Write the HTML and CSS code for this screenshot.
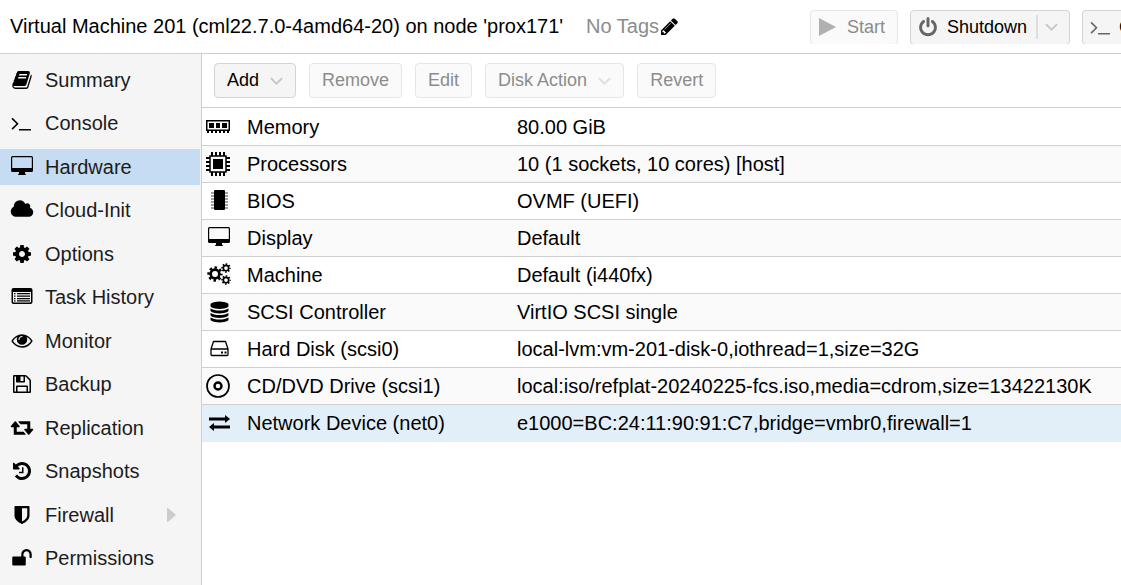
FILE: index.html
```html
<!doctype html>
<html lang="en">
  <head>
    <meta charset="UTF-8" />
    <meta name="viewport" content="width=device-width, initial-scale=1.0" />
    <title>Virtual Machine 201 - Hardware</title>
    <link rel="stylesheet" href="styles.css">
  </head>
  <body>
    <!-- Shared icons -->
    <svg class="sprite" aria-hidden="true">
      <symbol id="i-desktop" viewBox="0 0 24 24">
        <path fill-rule="evenodd" d="M2.500 1h19a1.500 1.500 0 0 1 1.500 1.500v13a1.500 1.500 0 0 1-1.500 1.500h-6.500v1.500q1 .5 1 1.500h-8q0-1 1-1.500v-1.500h-6.500a1.500 1.500 0 0 1-1.500-1.500v-13a1.500 1.500 0 0 1 1.500-1.500zM2.800 2.200q-.6 0-.6.6v10.200h19.600v-10.200q0-.6-.6-.6z" />
      </symbol>
      <symbol id="i-terminal" viewBox="-64 -128 2048 2048">
        <path d="M649 983l-466 466q-10 10-23 10t-23-10l-50-50q-10-10-10-23t10-23l393-393-393-393q-10-10-10-23t10-23l50-50q10-10 23-10t23 10l466 466q10 10 10 23t-10 23zm1079 457v64q0 14-9 23t-23 9h-960q-14 0-23-9t-9-23v-64q0-14 9-23t23-9h960q14 0 23 9t9 23z" />
      </symbol>
      <symbol id="i-cog" viewBox="-128 -128 2048 2048">
        <path d="M1152 896q0-106-75-181t-181-75-181 75-75 181 75 181 181 75 181-75 75-181zm512-109v222q0 12-8 23t-20 13l-185 28q-19 54-39 91 35 50 107 138 10 12 10 25t-9 23q-27 37-99 108t-94 71q-12 0-26-9l-138-108q-44 23-91 38-16 136-29 186-7 28-36 28h-222q-14 0-24.500-8.500t-11.500-21.500l-28-184q-49-16-90-37l-141 107q-10 9-25 9-14 0-25-11-126-114-165-168-7-10-7-23 0-12 8-23 15-21 51-66.500t54-70.500q-27-50-41-99l-183-27q-13-2-21-12.500t-8-23.500v-222q0-12 8-23t19-13l186-28q14-46 39-92-40-57-107-138-10-12-10-24 0-10 9-23 26-36 98.500-107.500t94.500-71.500q13 0 26 10l138 107q44-23 91-38 16-136 29-186 7-28 36-28h222q14 0 24.500 8.500t11.500 21.500l28 184q49 16 90 37l142-107q9-9 24-9 13 0 25 10 129 119 165 170 7 8 7 22 0 12-8 23-15 21-51 66.500t-54 70.500q26 50 41 98l183 28q13 2 21 12.500t8 23.500z" />
      </symbol>
      <symbol id="i-gear" viewBox="0 0 24 24">
        <circle cx="12" cy="12" r="6.500" fill="none" stroke="#000" stroke-width="4" />
        <circle cx="12" cy="12" r="9.500" fill="none" stroke="#000" stroke-width="4" stroke-dasharray="3.730 3.730" stroke-dashoffset="1.860" />
      </symbol>
      <symbol id="i-chevron" viewBox="0 0 14 10">
        <path d="M1 2l6 6 6-6" fill="none" stroke="currentColor" stroke-width="2" />
      </symbol>
    </svg>

    <header class="header">
      <h1 class="title">Virtual Machine 201 (cml22.7.0-4amd64-20) on node 'prox171'</h1>
      <div class="tags">
        <span>No Tags</span>
        <button type="button" class="tag-edit" aria-label="Edit Tags">
          <svg class="pencil" viewBox="128 128 1536 1536"><path d="M491 1536l91-91-235-235-91 91v107h128v128h107zm523-928q0-22-22-22-10 0-17 7l-542 542q-7 7-7 17 0 22 22 22 10 0 17-7l542-542q7-7 7-17zm-54-192l416 416-832 832h-416v-416zm683 96q0 53-37 90l-166 166-416-416 166-165q36-38 90-38 53 0 91 38l235 234q37 39 37 91z" /></svg>
        </button>
      </div>
      <div class="actions">
        <button type="button" class="btn btn-icon" disabled>
          <svg class="icon-sm" viewBox="0 0 20 20"><path d="M1 1l17 9-17 9z" /></svg>
          Start
        </button>
        <button type="button" class="btn btn-icon btn-split">
          <svg class="icon-sm" viewBox="64 0 1664 1728"><path d="M1664 896q0 156-61 298t-164 245-245 164-298 61-298-61-245-164-164-245-61-298q0-182 80.500-343t226.500-270q43-32 95.500-25t83.500 50q32 42 24.500 94.500t-49.500 84.500q-98 74-151.500 181t-53.500 228q0 104 40.500 198.500t109.500 163.500 163.500 109.500 198.500 40.500 198.500-40.500 163.500-109.500 109.500-163.500 40.500-198.500q0-121-53.500-228t-151.500-181q-42-32-49.500-84.500t24.500-94.500q31-43 84-50t95 25q146 109 226.500 270t80.500 343zm-640-768v640q0 52-38 90t-90 38-90-38-38-90v-640q0-52 38-90t90-38 90 38 38 90z" /></svg>
          Shutdown
          <span class="split"><svg class="chevron"><use href="#i-chevron" /></svg></span>
        </button>
        <button type="button" class="btn btn-icon btn-console">
          <svg class="icon"><use href="#i-terminal" /></svg>
          Console
        </button>
      </div>
    </header>

    <div class="layout">
      <nav class="sidebar">
        <a class="nav-item" href="#summary">
          <svg class="icon" viewBox="-128 -128 2048 2048"><path d="M1703 478q40 57 18 129l-275 906q-19 64-76.500 107.500t-122.500 43.500h-923q-77 0-148.500-53.500t-99.500-131.500q-24-67-2-127 0-4 3-27t4-37q1-8-3-21.500t-3-19.500q2-11 8-21t16.500-23.500 16.500-23.500q23-38 45-91.500t30-91.500q3-10 .5-30t-.5-28q3-11 17-28t17-23q21-36 42-92t25-90q1-9-2.500-32t.5-28q4-13 22-30.500t22-22.500q19-26 42.500-84.500t27.500-96.500q1-8-3-25.500t-2-26.500q2-8 9-18t18-23 17-21q8-12 16.500-30.500t15-35 16-36 19.500-32 26.500-23.500 36-11.500 47.500 5.500l-1 3q38-9 51-9h761q74 0 114 56t18 130l-274 906q-36 119-71.500 153.500t-128.500 34.500h-869q-27 0-38 15-11 16-1 43 24 70 144 70h923q29 0 56-15.500t35-41.500l300-987q7-22 5-57 38 15 59 43zm-1064 2q-4 13 2 22.500t20 9.500h608q13 0 25.500-9.500t16.500-22.500l21-64q4-13-2-22.500t-20-9.500h-608q-13 0-25.500 9.500t-16.500 22.500zm-83 256q-4 13 2 22.500t20 9.500h608q13 0 25.500-9.500t16.500-22.500l21-64q4-13-2-22.500t-20-9.500h-608q-13 0-25.500 9.500t-16.500 22.500z" /></svg>
          Summary
        </a>
        <a class="nav-item" href="#console">
          <svg class="icon"><use href="#i-terminal" /></svg>
          Console
        </a>
        <a class="nav-item active" href="#hardware" aria-current="page">
          <svg class="icon"><use href="#i-desktop" /></svg>
          Hardware
        </a>
        <a class="nav-item" href="#cloud-init">
          <svg class="icon" viewBox="0 -64 2048 2048"><path d="M1984 1152q0 159-112.500 271.500t-271.500 112.500h-1088q-185 0-316.500-131.500t-131.500-316.500q0-132 71-241.500t187-163.500q-2-28-2-43 0-212 150-362t362-150q158 0 286.500 88t187.500 230q70-62 166-62 106 0 181 75t75 181q0 75-41 138 129 30 213 134.500t84 239.500z" /></svg>
          Cloud-Init
        </a>
        <a class="nav-item" href="#options">
          <svg class="icon"><use href="#i-cog" /></svg>
          Options
        </a>
        <a class="nav-item" href="#tasks">
          <svg class="icon" viewBox="0 0 24 24"><path fill-rule="evenodd" d="M3.500 3h17a2 2 0 0 1 2 2v12a2 2 0 0 1-2 2h-17a2 2 0 0 1-2-2v-12a2 2 0 0 1 2-2zM3 7v9.500q0 1 1 1h16q1 0 1-1v-9.500zM4 8h1.500v1.200h-1.500zM7 8h13v1.200h-13zM4 10.500h1.500v1.200h-1.500zM7 10.500h13v1.200h-13zM4 13h1.500v1.200h-1.500zM7 13h13v1.200h-13zM4 15.300h1.500v1.200h-1.500zM7 15.300h13v1.200h-13z" /></svg>
          Task History
        </a>
        <a class="nav-item" href="#monitor">
          <svg class="icon" viewBox="-128 -64 2048 2048"><path d="M1664 960q-152-236-381-353 61 104 61 225 0 185-131.500 316.500t-316.500 131.500-316.500-131.500-131.500-316.500q0-121 61-225-229 117-381 353 133 205 333.500 326.500t434.500 121.500 434.500-121.500 333.500-326.500zm-720-384q0-20-14-34t-34-14q-125 0-214.500 89.500t-89.500 214.500q0 20 14 34t34 14 34-14 14-34q0-86 61-147t147-61q20 0 34-14t14-34zm848 384q0 34-20 69-140 230-376.500 368.500t-499.500 138.500-499.500-139-376.500-368q-20-35-20-69t20-69q140-229 376.500-368t499.500-139 499.500 139 376.500 368q20 35 20 69z" /></svg>
          Monitor
        </a>
        <a class="nav-item" href="#backup">
          <svg class="icon" viewBox="-128 -128 2048 2048"><path d="M512 1536h768v-384h-768v384zm896 0h128v-896q0-14-10-38.500t-20-34.500l-281-281q-10-10-34-20t-39-10v416q0 40-28 68t-68 28h-576q-40 0-68-28t-28-68v-416h-128v1280h128v-416q0-40 28-68t68-28h832q40 0 68 28t28 68v416zm-384-928v-320q0-13-9.500-22.500t-22.500-9.500h-192q-13 0-22.500 9.500t-9.500 22.500v320q0 13 9.500 22.500t22.500 9.500h192q13 0 22.500-9.500t9.500-22.500zm640 32v928q0 40-28 68t-68 28h-1344q-40 0-68-28t-28-68v-1344q0-40 28-68t68-28h928q40 0 88 20t76 48l280 280q28 28 48 76t20 88z" /></svg>
          Backup
        </a>
        <a class="nav-item" href="#replication">
          <svg class="icon" viewBox="-64 -64 2048 2048"><path d="M1280 1504q0 13-9.500 22.500t-22.500 9.500h-960q-8 0-13.500-2t-9-7-5.500-8-3-11.500-1-11.500v-600h-192q-26 0-45-19t-19-45q0-24 15-41l320-384q19-22 49-22t49 22l320 384q15 17 15 41 0 26-19 45t-45 19h-192v384h576q16 0 25 11l160 192q7 11 7 21zm640-416q0 24-15 41l-320 384q-20 23-49 23t-49-23l-320-384q-15-17-15-41 0-26 19-45t45-19h192v-384h-576q-16 0-25-12l-160-192q-7-9-7-20 0-13 9.500-22.500t22.500-9.500h960q8 0 13.500 2t9 7 5.500 8 3 11.500 1 11.500v600h192q26 0 45 19t19 45z" /></svg>
          Replication
        </a>
        <a class="nav-item" href="#snapshots">
          <svg class="icon" viewBox="-128 -128 2048 2048"><path d="M1664 896q0 156-61 298t-164 245-245 164-298 61q-172 0-327-72.500t-264-204.500q-7-10-6.500-22.500t8.500-20.500l137-138q10-9 25-9 16 2 23 12 73 95 179 147t225 52q104 0 198.500-40.500t163.500-109.500 109.500-163.500 40.500-198.500-40.500-198.500-109.500-163.500-163.500-109.500-198.500-40.500q-98 0-188 35.500t-160 101.500l137 138q31 30 14 69-17 40-59 40h-448q-26 0-45-19t-19-45v-448q0-42 40-59 39-17 69 14l130 129q107-101 244.500-156.500t284.500-55.500q156 0 298 61t245 164 164 245 61 298zm-640-288v448q0 14-9 23t-23 9h-320q-14 0-23-9t-9-23v-64q0-14 9-23t23-9h224v-352q0-14 9-23t23-9h64q14 0 23 9t9 23z" /></svg>
          Snapshots
        </a>
        <a class="nav-item" href="#firewall">
          <svg class="icon" viewBox="-128 -128 2048 2048"><path d="M1344 960v-640h-448v1137q119-63 213-137 235-184 235-360zm192-768v768q0 86-33.500 170.500t-83 150-118 127.500-126.500 103-121 77.500-89.500 49.500-42.500 20q-12 6-26 6t-26-6q-16-7-42.500-20t-89.500-49.500-121-77.500-126.500-103-118-127.500-83-150-33.500-170.500v-768q0-26 19-45t45-19h1152q26 0 45 19t19 45z" /></svg>
          Firewall
          <svg class="expander" viewBox="0 0 9 14"><path d="M0 0h1l8 7-8 7h-1z" /></svg>
        </a>
        <a class="nav-item" href="#permissions">
          <svg class="icon" viewBox="-128 -128 2048 2048"><path d="M1728 576v256q0 26-19 45t-45 19h-64q-26 0-45-19t-19-45v-256q0-106-75-181t-181-75-181 75-75 181v192h96q40 0 68 28t28 68v576q0 40-28 68t-68 28h-960q-40 0-68-28t-28-68v-576q0-40 28-68t68-28h672v-192q0-185 131.500-316.500t316.500-131.500 316.500 131.500 131.500 316.500z" /></svg>
          Permissions
        </a>
      </nav>

      <main class="content">
        <div class="toolbar">
          <button type="button" class="btn">Add <svg class="chevron"><use href="#i-chevron" /></svg></button>
          <button type="button" class="btn" disabled>Remove</button>
          <button type="button" class="btn" disabled>Edit</button>
          <button type="button" class="btn" disabled>Disk Action <svg class="chevron"><use href="#i-chevron" /></svg></button>
          <button type="button" class="btn" disabled>Revert</button>
        </div>

        <table class="hardware">
          <tbody>
            <tr>
              <th scope="row"><span class="device">
                <svg class="icon" viewBox="0 0 24 24"><path fill-rule="evenodd" d="M0 5h24v11h-1v2h-2v-2h-2v2h-2v-2h-2v2h-2v-2h-2v2h-2v-2h-2v2h-2v-2h-2v2h-2v-2h-1zM1.500 6.500v8h21v-8zM3 8h5v5h-5zM10 8h4v5h-4zM16 8h5v5h-5z" /></svg>
                Memory</span></th>
              <td>80.00 GiB</td>
            </tr>
            <tr>
              <th scope="row"><span class="device">
                <svg class="icon" viewBox="0 0 24 24"><path d="M7 7h10v10h-10z" /><path d="M4 4h16v16h-16z" fill="none" stroke="#000" stroke-width="1.500" /><path d="M6 0v4M10 0v4M14 0v4M18 0v4M6 20v4M10 20v4M14 20v4M18 20v4M0 6h4M0 10h4M0 14h4M0 18h4M20 6h4M20 10h4M20 14h4M20 18h4" stroke="#000" stroke-width="2" /></svg>
                Processors</span></th>
              <td>10 (1 sockets, 10 cores) [host]</td>
            </tr>
            <tr>
              <th scope="row"><span class="device">
                <svg class="icon" viewBox="0 0 24 24"><path d="M9 1h9a1 1 0 0 1 1 1v18a1 1 0 0 1-1 1h-9a1 1 0 0 1-1-1v-18a1 1 0 0 1 1-1z" /><path d="M5 4h3M5 7h3M5 10h3M5 13h3M5 16h3M5 19h3M19 4h3M19 7h3M19 10h3M19 13h3M19 16h3M19 19h3" stroke="#444" stroke-width="1" /></svg>
                BIOS</span></th>
              <td>OVMF (UEFI)</td>
            </tr>
            <tr>
              <th scope="row"><span class="device">
                <svg class="icon" viewBox="0 0 24 24"><use href="#i-desktop" x="1" y="0" width="24" height="24" /></svg>
                Display</span></th>
              <td>Default</td>
            </tr>
            <tr>
              <th scope="row"><span class="device">
                <svg class="icon" viewBox="0 0 24 24"><use href="#i-gear" x="1" y="3" width="16" height="16" /><use href="#i-gear" x="15" y="0" width="10" height="10" /><use href="#i-gear" x="15" y="12" width="10" height="10" /></svg>
                Machine</span></th>
              <td>Default (i440fx)</td>
            </tr>
            <tr>
              <th scope="row"><span class="device">
                <svg class="icon" viewBox="-256 -128 2048 2048"><path d="M896 768q237 0 443-43t325-127v170q0 69-103 128t-280 93.500-385 34.500-385-34.500-280-93.500-103-128v-170q119 84 325 127t443 43zm0 768q237 0 443-43t325-127v170q0 69-103 128t-280 93.500-385 34.500-385-34.500-280-93.500-103-128v-170q119 84 325 127t443 43zm0-384q237 0 443-43t325-127v170q0 69-103 128t-280 93.500-385 34.500-385-34.500-280-93.500-103-128v-170q119 84 325 127t443 43zm0-1152q208 0 385 34.500t280 93.500 103 128v128q0 69-103 128t-280 93.500-385 34.500-385-34.500-280-93.500-103-128v-128q0-69 103-128t280-93.500 385-34.500z" /></svg>
                SCSI Controller</span></th>
              <td>VirtIO SCSI single</td>
            </tr>
            <tr>
              <th scope="row"><span class="device">
                <svg class="icon" viewBox="0 0 24 24"><path d="M5 12l2.500-7.500h12l2.500 7.500v5.500q0 1-1 1h-15q-1 0-1-1v-5.500h17" fill="none" stroke="#000" stroke-width="1.300" stroke-linejoin="round" /><path d="M15 14.500h2v2h-2zM18.500 14.500h2v2h-2z" /></svg>
                Hard Disk (scsi0)</span></th>
              <td>local-lvm:vm-201-disk-0,iothread=1,size=32G</td>
            </tr>
            <tr>
              <th scope="row"><span class="device">
                <svg class="icon" viewBox="0 0 24 24" fill="none" stroke="#000"><circle cx="12" cy="12" r="11" stroke-width="1.700" /><circle cx="12" cy="12" r="3.500" stroke-width="2.400" /></svg>
                CD/DVD Drive (scsi1)</span></th>
              <td>local:iso/refplat-20240225-fcs.iso,media=cdrom,size=13422130K</td>
            </tr>
            <tr class="selected">
              <th scope="row"><span class="device">
                <svg class="icon" viewBox="0 0 24 24"><path d="M3 6.500h16v-2.500l5 4-5 4v-2.500h-16zM24 17.500h-16v2.500l-5-4 5-4v2.500h16z" /></svg>
                Network Device (net0)</span></th>
              <td>e1000=BC:24:11:90:91:C7,bridge=vmbr0,firewall=1</td>
            </tr>
          </tbody>
        </table>
      </main>
    </div>
  </body>
</html>
```
FILE: styles.css
```css
* {
  margin: 0;
  padding: 0;
  box-sizing: border-box;
}

body {
  display: flex;
  flex-direction: column;
  min-height: 100vh;
  overflow-x: hidden;
  font-family: "Liberation Sans", Arial, sans-serif;
  font-size: 20px;
  color: #000;
  background: #fff;
}

.sprite {
  display: none;
}

.icon {
  width: 24px;
  height: 24px;
  flex-shrink: 0;
  overflow: visible;
}

.icon-sm {
  width: 20px;
  height: 20px;
  flex-shrink: 0;
}

.chevron {
  width: 13px;
  height: 10px;
  color: #c4c4c4;
}

.header {
  display: flex;
  align-items: center;
  height: 54px;
  padding-left: 10px;
  border-bottom: 1px solid #cfcfcf;
  white-space: nowrap;
}

.title {
  flex: 0 0 576px;
  font-size: 20px;
  font-weight: normal;
}

.tags {
  display: flex;
  align-items: center;
  gap: 2px;
  color: #8c8c8c;
}

.tag-edit {
  display: flex;
  border: none;
  background: none;
}

.pencil {
  width: 17px;
  height: 17px;
}

/* the row of actions runs past the window edge and is cut off there */
.actions {
  display: flex;
  flex: 0 0 311px;
  gap: 12px;
  height: 34px;
  margin-left: auto;
  overflow: hidden;
}

.btn {
  display: flex;
  flex-shrink: 0;
  align-items: center;
  gap: 11px;
  height: 35px;
  padding: 0 12px;
  font-family: inherit;
  font-size: 18px;
  color: #000;
  background: #f5f5f5;
  border: 1px solid #d4d4d4;
  border-radius: 4px;
  white-space: nowrap;
}

.btn:disabled {
  color: #8c8c8c;
  background: #fafafa;
  border-color: #e6e6e6;
}

.btn:disabled .chevron {
  color: #dedede;
}

.btn-icon {
  gap: 9px;
  padding: 0 12px 0 7px;
}

.btn-icon svg {
  fill: #666;
}

.btn-icon:disabled svg {
  fill: #b0b0b0;
}

.btn-console {
  gap: 6px;
  padding-left: 6px;
}

.split {
  display: flex;
  align-items: center;
  height: 24px;
  padding-left: 7px;
  border-left: 2px solid #dedede;
}

.btn-split {
  padding-right: 11px;
}

.layout {
  display: flex;
  flex: 1;
}

.sidebar {
  display: flex;
  flex-direction: column;
  flex: 0 0 202px;
  gap: 7px;
  padding: 8px 1px 8px 0;
  background: #f5f5f5;
  border-right: 1px solid #cfcfcf;
}

.nav-item {
  display: flex;
  align-items: center;
  gap: 11px;
  height: 36px;
  padding: 0 24px 0 10px;
  color: #1c1c1c;
  text-decoration: none;
}

.nav-item .icon {
  fill: #000;
}

.nav-item:nth-child(even) {
  margin-bottom: 1px;
}

.nav-item.active {
  background: #c5dcf2;
}

.expander {
  width: 9px;
  height: 14px;
  margin-left: auto;
  fill: #ccc;
}

.content {
  flex: 1;
  min-width: 0;
}

.toolbar {
  display: flex;
  align-items: center;
  gap: 13px;
  height: 54px;
  padding: 0 12px;
  border-bottom: 1px solid #cfcfcf;
}

.hardware {
  width: 100%;
  padding-top: 1px;
  table-layout: fixed;
  border-spacing: 0;
}

.hardware th,
.hardware td {
  height: 37px;
  border-bottom: 1px solid #cfcfcf;
  font-weight: normal;
  text-align: left;
  white-space: nowrap;
}

.hardware th {
  width: 315px;
  padding-left: 4px;
}

.hardware tr:nth-child(even) {
  background: #fafafa;
}

.hardware tr.selected {
  background: #e2eff9;
}

.hardware tr.selected th,
.hardware tr.selected td {
  border-color: #e2eff9;
}

.device {
  display: flex;
  align-items: center;
  gap: 17px;
}
```
